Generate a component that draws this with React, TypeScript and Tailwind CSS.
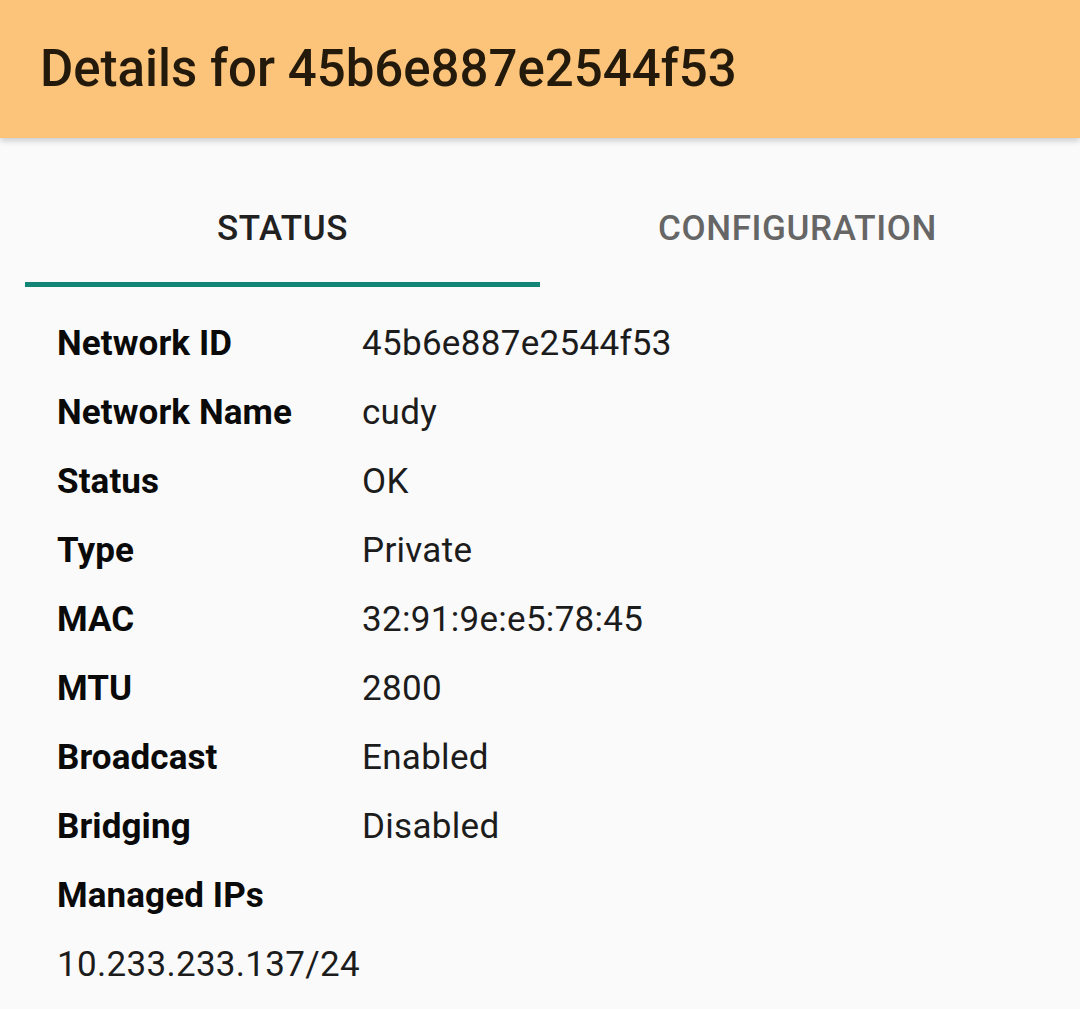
const rows: [string, string][] = [
  ['Network ID', '45b6e887e2544f53'],
  ['Network Name', 'cudy'],
  ['Status', 'OK'],
  ['Type', 'Private'],
  ['MAC', '32:91:9e:e5:78:45'],
  ['MTU', '2800'],
  ['Broadcast', 'Enabled'],
  ['Bridging', 'Disabled'],
]

export default function App() {
  return (
    <div className="h-[1009px] overflow-hidden bg-[#fafafa] font-['Roboto',sans-serif]">
      <header className="relative z-10 flex h-[138px] items-center bg-[#fcc47a] px-[40px] shadow-[0_3px_6px_rgba(0,0,0,0.18)]">
        <h1 className="text-[51px] font-medium text-[#231a0c]">Details for 45b6e887e2544f53</h1>
      </header>

      {/* tabs */}
      <div className="flex px-[25px] pt-[71px]">
        <div className="flex w-1/2 flex-col items-center">
          <span className="pb-[33px] text-[35px] font-medium leading-[40px] tracking-[0.6px] text-[#212121]">STATUS</span>
          <div className="h-[5px] w-full bg-[#138577]" />
        </div>
        <div className="flex w-1/2 flex-col items-center">
          <span className="pb-[33px] text-[35px] font-medium leading-[40px] tracking-[0.6px] text-[#666]">CONFIGURATION</span>
          <div className="h-[5px] w-full" />
        </div>
      </div>

      <div className="px-[57px] pt-[23px]">
        {rows.map(([k, v]) => (
          <div key={k} className="flex h-[69px] items-center text-[35px]">
            <span className="w-[305px] font-bold tracking-[0.1px] text-[#0a0a0a]">{k}</span>
            <span className="tracking-[0.3px] text-[#1c1c1c]">{v}</span>
          </div>
        ))}
        <div className="flex h-[69px] items-center text-[35px] font-bold tracking-[0.1px] text-[#0a0a0a]">Managed IPs</div>
        <div className="flex h-[69px] items-center text-[35px] tracking-[0.3px] text-[#1c1c1c]">10.233.233.137/24</div>
      </div>
    </div>
  )
}
